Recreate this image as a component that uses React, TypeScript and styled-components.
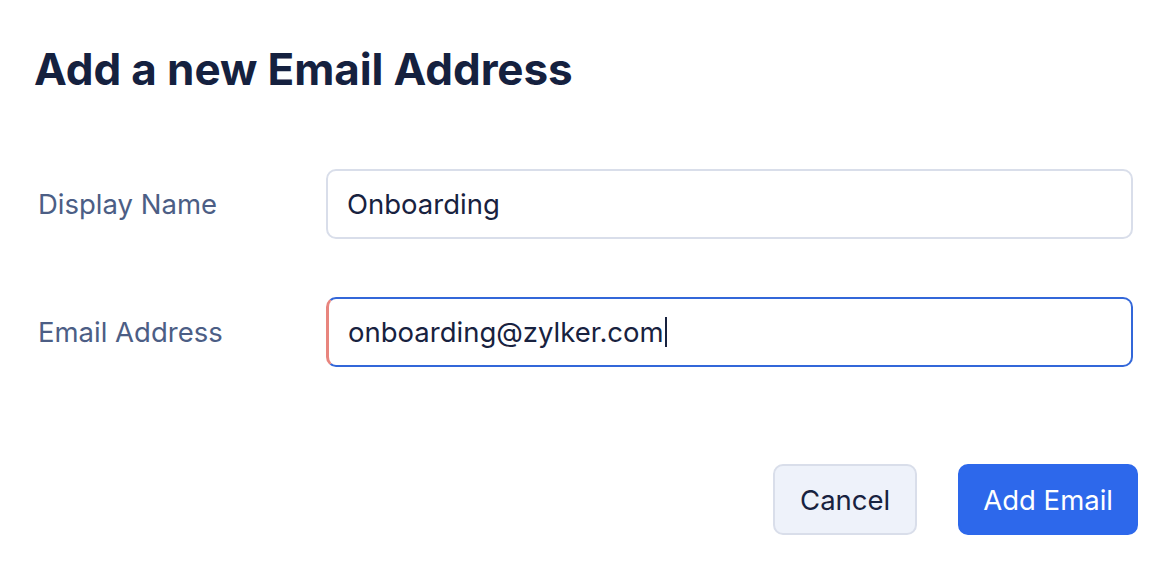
import styled, { createGlobalStyle } from 'styled-components';

const GlobalStyle = createGlobalStyle`
  body {
    margin: 0;
    background: #ffffff;
    font-family: Inter, "Noto Sans", sans-serif;
  }
`;

function App() {
  return (
    <>
      <GlobalStyle />
      <Dialog>
        <Title>Add a new Email Address</Title>
        <Form>
          <Label>Display Name</Label>
          <Field>Onboarding</Field>
          <Label>Email Address</Label>
          <Field $active>
            onboarding@zylker.com<Caret />
          </Field>
        </Form>
        <Actions>
          <Button>Cancel</Button>
          <Button $primary>Add Email</Button>
        </Actions>
      </Dialog>
    </>
  );
}

export default App;

const Dialog = styled.div`
  width: 1174px;
  height: 568px;
  box-sizing: border-box;
  padding: 40px 36px 0 35px;
  display: flex;
  flex-direction: column;
`;

const Title = styled.h1`
  margin: 0 0 0 -1px;
  font-size: 44px;
  line-height: 58px;
  font-weight: 700;
  letter-spacing: -0.1px;
  color: #15213f;
`;

const Form = styled.div`
  margin-top: 71px;
  margin-right: 5px;
  display: grid;
  grid-template-columns: 291px 1fr;
  row-gap: 58px;
  align-items: center;
`;

const Label = styled.div`
  padding-left: 3px;
  font-size: 27.5px;
  color: #4c5e85;
`;

const Field = styled.div<{ $active?: boolean }>`
  height: 70px;
  box-sizing: border-box;
  display: flex;
  align-items: center;
  padding-left: 19px;
  border: ${(p) => (p.$active ? '2px solid #3367d9' : '2px solid #d9deea')};
  border-left: ${(p) => (p.$active ? '3px solid #e8857e' : '2px solid #d9deea')};
  border-radius: 10px;
  font-size: 27.5px;
  color: #18223f;
`;

const Caret = styled.span`
  display: inline-block;
  width: 2px;
  height: 30px;
  margin-left: 1px;
  background: #18223f;
`;

const Actions = styled.div`
  margin-top: 97px;
  display: flex;
  justify-content: flex-end;
  gap: 41px;
`;

const Button = styled.button<{ $primary?: boolean }>`
  height: 71px;
  padding: 0 ${(p) => (p.$primary ? '23px' : '25px')};
  border-radius: 10px;
  border: 2px solid ${(p) => (p.$primary ? '#2d68eb' : '#d9deea')};
  background: ${(p) => (p.$primary ? '#2d68eb' : '#eef2fa')};
  color: ${(p) => (p.$primary ? '#ffffff' : '#18223f')};
  font-family: Inter, "Noto Sans", sans-serif;
  font-size: 27.5px;
  font-weight: 400;
  cursor: pointer;
`;
